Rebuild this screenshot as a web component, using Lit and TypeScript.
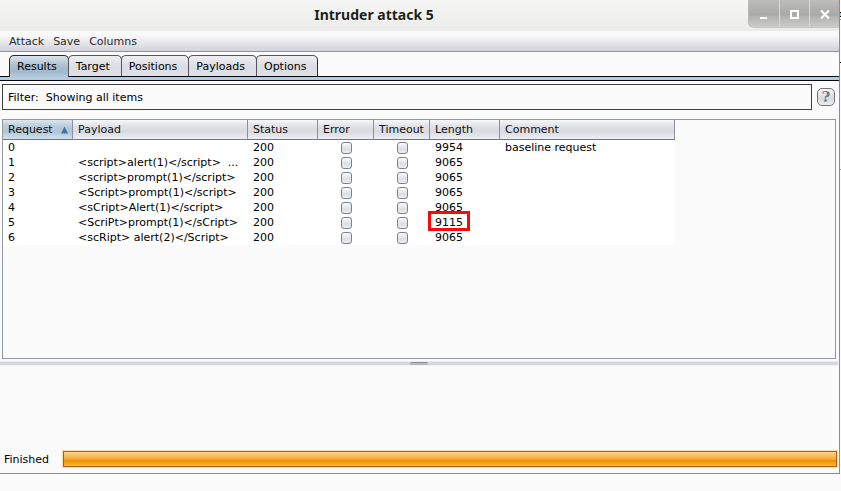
import { LitElement, html, css, svg } from "lit";
import { customElement, state } from "lit/decorators.js";
import { classMap } from "lit/directives/class-map.js";

interface AttackResult {
  request: number;
  payload: string;
  status: number;
  length: number;
  comment?: string;
  marked?: boolean;
}

const RESULTS: AttackResult[] = [
  { request: 0, payload: "", status: 200, length: 9954, comment: "baseline request" },
  { request: 1, payload: "<script>alert(1)</script>  ...", status: 200, length: 9065 },
  { request: 2, payload: "<script>prompt(1)</script>", status: 200, length: 9065 },
  { request: 3, payload: "<Script>prompt(1)</script>", status: 200, length: 9065 },
  { request: 4, payload: "<sCript>Alert(1)</script>", status: 200, length: 9065 },
  { request: 5, payload: "<ScriPt>prompt(1)</sCript>", status: 200, length: 9115, marked: true },
  { request: 6, payload: "<scRipt> alert(2)</Script>", status: 200, length: 9065 },
];

const TABS = ["Results", "Target", "Positions", "Payloads", "Options"];
const MENUS = ["Attack", "Save", "Columns"];

@customElement("results-table")
export class ResultsTable extends LitElement {
  static styles = css`
    :host {
      display: block;
      box-sizing: border-box;
      border: 1px solid #9297a1;
      overflow: auto;
    }
    .grid {
      table-layout: fixed;
      width: 672px;
      border-collapse: separate;
      border-spacing: 0;
    }
    .narrow { width: 56px; }
    .medium { width: 70px; }
    .wide { width: 175px; }
    th {
      box-sizing: border-box;
      height: 20px;
      padding: 0 0 0 5px;
      border-right: 1px solid #8b8f9b;
      border-bottom: 1px solid #6f7480;
      font-weight: normal;
      text-align: left;
      white-space: nowrap;
      color: #111;
      background: linear-gradient(#f6f7f9, #e2e3e8 30%, #d8dae0 60%, #eceff5);
    }
    .sorted {
      background: linear-gradient(#dce6ef, #bccfdd 30%, #afc5d6 60%, #cfe1ee);
    }
    .sortmark {
      display: inline-block;
      margin-left: 7px;
      vertical-align: -1px;
    }
    td {
      box-sizing: border-box;
      height: 15px;
      padding: 0 0 0 5px;
      line-height: 15px;
      white-space: pre;
      background: #fff;
    }
    .check {
      padding: 0 0 0 1px;
      text-align: center;
      vertical-align: top;
    }
    .check input {
      appearance: none;
      display: block;
      box-sizing: border-box;
      width: 11px;
      height: 12px;
      margin: 2px auto 0;
      border: 1px solid #7e818a;
      border-radius: 3px;
      background: linear-gradient(#fafafb, #dcdee4 60%, #eceef3);
    }
    .marked { position: relative; }
    .mark {
      position: absolute;
      box-sizing: border-box;
      left: -2px;
      top: -4px;
      width: 42px;
      height: 20px;
      border: 3px solid #f40b0b;
    }
  `;

  render() {
    return html`
      <table class="grid">
        <colgroup>
          <col class="medium" /><col class="wide" /><col class="medium" />
          <col class="narrow" /><col class="narrow" /><col class="medium" /><col class="wide" />
        </colgroup>
        <thead>
          <tr>
            <th class="sorted" aria-sort="ascending">Request<svg class="sortmark" width="9" height="8" viewBox="0 0 9 8" aria-hidden="true"><path d="M4.500 .5 8 7.500H1z" fill="#4173aa" /></svg></th>
            <th>Payload</th>
            <th>Status</th>
            <th>Error</th>
            <th>Timeout</th>
            <th>Length</th>
            <th>Comment</th>
          </tr>
        </thead>
        <tbody>
          ${RESULTS.map(
            (r) => html`<tr>
              <td>${r.request}</td>
              <td>${r.payload}</td>
              <td>${r.status}</td>
              <td class="check"><input type="checkbox" aria-label="Error, request ${r.request}" /></td>
              <td class="check"><input type="checkbox" aria-label="Timeout, request ${r.request}" /></td>
              <td class=${classMap({ marked: !!r.marked })}>${r.length}${r.marked ? html`<span class="mark"></span>` : ""}</td>
              <td>${r.comment ?? ""}</td>
            </tr>`
          )}
        </tbody>
      </table>
    `;
  }
}

const GLYPHS = {
  Minimize: svg`<path d="M1 12h7" stroke="#fff" stroke-width="2" />`,
  Maximize: svg`<path d="M1 5h7v7h-7z" fill="none" stroke="#fff" stroke-width="2" />`,
  Close: svg`<path d="M1 4.500l8 8M9 4.500l-8 8" stroke="#fff" stroke-width="2.200" />`,
};

@customElement("app-root")
export class AppRoot extends LitElement {
  static styles = css`
    :host {
      display: flex;
      box-sizing: border-box;
      min-height: 100vh;
      padding-bottom: 17px;
      background: #fbfbfb;
      font: 11px/15px "DejaVu Sans", sans-serif;
      color: #000;
    }
    button {
      font: inherit;
      color: inherit;
      margin: 0;
      border: 0;
      background: none;
    }
    .window {
      flex: 1;
      display: flex;
      flex-direction: column;
      min-width: 0;
      border-right: 1px solid #8d8d8d;
      border-bottom: 1px solid #8d8d8d;
    }
    .backdrop {
      width: 1px;
      background: linear-gradient(
        #fbfbfb 12px, #000 12px 13px, #a9c6dc 13px 16px, #000 16px 17px, #fbfbfb 17px 19px,
        #8b8f9b 19px 20px, #fbfbfb 20px 62px, #000 62px 63px, #fbfbfb 63px 169px,
        #9297a1 169px 170px, #fbfbfb 170px
      );
    }
    .titlebar {
      display: flex;
      align-items: flex-start;
      height: 31px;
      background: linear-gradient(#f6f6f4, #ebebe9);
    }
    h1 {
      flex: 1;
      margin: 0;
      font: bold 14px/29px "Noto Sans", "Open Sans", sans-serif;
      text-align: center;
      color: #1c1f20;
      text-shadow: 0 1px #fff;
    }
    .controls {
      display: flex;
      border-left: 1px solid #b9b9b9;
      border-bottom: 1px solid #c6c6c6;
      border-radius: 0 0 0 6px;
      overflow: hidden;
      background: linear-gradient(#bcbcbb, #a9a9a8 55%, #b2b2b1 60%, #cbcbca);
    }
    .controls button {
      width: 30px;
      height: 27px;
      padding: 0;
    }
    .controls button + button {
      border-left: 1px solid #d9d9d8;
    }
    .controls svg { display: block; margin: 0 auto; }
    .menubar {
      display: flex;
      gap: 9px;
      height: 20px;
      padding-left: 9px;
      border-bottom: 1px solid #9092a0;
      background: linear-gradient(#fafafa 20%, #d9dae1 85%, #d4d5dc);
      color: #2b2b2b;
    }
    .menubar button { padding: 0; }
    .tabs {
      display: flex;
      padding: 3px 9px 0;
      border-bottom: 1px solid #05050c;
    }
    .tab {
      box-sizing: border-box;
      height: 21px;
      padding: 0 11px 0 7px;
      margin-right: -1px;
      border: 1px solid #55565c;
      border-right-color: #2c2d3a;
      border-bottom: 0;
      border-radius: 5px 5px 0 0;
      background: linear-gradient(#f0f0f3, #dcdde3 50%, #dfe1e7);
    }
    .active {
      height: 22px;
      margin-bottom: -1px;
      border-color: #1d2c40;
      background: linear-gradient(#dbe5ee, #abc0d1 45%, #a3b9cb 75%, #b3cade);
    }
    .tabstrip {
      height: 3px;
      border-bottom: 1px solid #05050c;
      background: #b3cde0;
    }
    .filter {
      display: flex;
      align-items: center;
      gap: 5px;
      padding: 3px 4px 0 2px;
    }
    .filtertext {
      flex: 1;
      box-sizing: border-box;
      height: 26px;
      padding: 0 5px;
      border: 1px solid #3f3f3f;
      text-align: left;
      white-space: pre;
      cursor: pointer;
    }
    .help {
      box-sizing: border-box;
      width: 18px;
      height: 18px;
      padding: 0;
      border: 1px solid #70747c;
      border-radius: 5px;
      background: linear-gradient(#f7f7f9, #d8dae0 60%, #edeff3);
      font: bold 15px/16px "DejaVu Serif", serif;
      color: #77797e;
    }
    results-table {
      flex: 1;
      margin: 9px 3px 2px 2px;
    }
    .divider {
      display: flex;
      justify-content: center;
      height: 5px;
      margin-right: 1px;
      background: linear-gradient(#ebebee 1px, #d7d8df 1px 4px, #f0f0f2 4px);
    }
    .grip {
      width: 18px;
      height: 3px;
      margin-top: 1px;
      border-radius: 2px;
      background: linear-gradient(#8d929c 1px, #b4b9c2 1px);
    }
    .lower { height: 84px; }
    .status {
      display: flex;
      align-items: center;
      gap: 14px;
      padding: 0 2px 5px 4px;
    }
    progress {
      appearance: none;
      flex: 1;
      box-sizing: border-box;
      height: 16px;
      margin: 1px 0;
      border: 1px solid #b85c0c;
      box-shadow: 0 0 0 1px #fbdcae;
      background: #fff;
    }
    progress::-webkit-progress-bar { background: #fff; }
    progress::-webkit-progress-value {
      background: linear-gradient(#fdd596, #f8b74f 35%, #f2a52e 55%, #e8920c 60%, #f3a01a 80%, #ffc13a);
    }
  `;

  @state() private tab = "Results";

  render() {
    return html`
      <main class="window">
        <header class="titlebar">
          <h1>Intruder attack 5</h1>
          <div class="controls">
            ${Object.entries(GLYPHS).map(
              ([name, glyph]) => html`<button aria-label=${name}>
                <svg width="10" height="16" viewBox="0 0 10 16">${glyph}</svg>
              </button>`
            )}
          </div>
        </header>
        <nav class="menubar">${MENUS.map((m) => html`<button>${m}</button>`)}</nav>
        <div class="tabs" role="tablist">
          ${TABS.map(
            (t) => html`<button
              role="tab"
              class=${classMap({ tab: true, active: t === this.tab })}
              aria-selected=${t === this.tab}
              @click=${() => (this.tab = t)}
            >${t}</button>`
          )}
        </div>
        <div class="tabstrip"></div>
        <div class="filter">
          <button class="filtertext">Filter:  Showing all items</button>
          <button class="help" aria-label="Help">?</button>
        </div>
        <results-table></results-table>
        <div class="divider"><span class="grip"></span></div>
        <section class="lower"></section>
        <footer class="status">
          <label for="progress">Finished</label>
          <progress id="progress" max="7" value="7"></progress>
        </footer>
      </main>
      <div class="backdrop"></div>
    `;
  }
}
